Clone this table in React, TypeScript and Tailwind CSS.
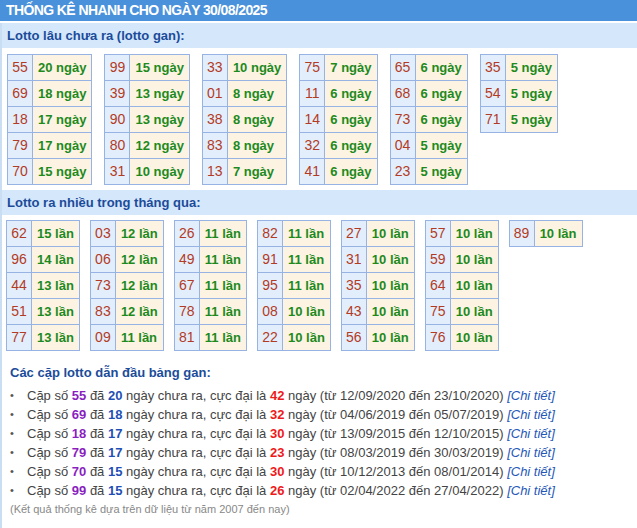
const gan: [string, string][][] = [
  [["55", "20"], ["69", "18"], ["18", "17"], ["79", "17"], ["70", "15"]],
  [["99", "15"], ["39", "13"], ["90", "13"], ["80", "12"], ["31", "10"]],
  [["33", "10"], ["01", "8"], ["38", "8"], ["83", "8"], ["13", "7"]],
  [["75", "7"], ["11", "6"], ["14", "6"], ["32", "6"], ["41", "6"]],
  [["65", "6"], ["68", "6"], ["73", "6"], ["04", "5"], ["23", "5"]],
  [["35", "5"], ["54", "5"], ["71", "5"]],
];

const nhieu: [string, string][][] = [
  [["62", "15"], ["96", "14"], ["44", "13"], ["51", "13"], ["77", "13"]],
  [["03", "12"], ["06", "12"], ["73", "12"], ["83", "12"], ["09", "11"]],
  [["26", "11"], ["49", "11"], ["67", "11"], ["78", "11"], ["81", "11"]],
  [["82", "11"], ["91", "11"], ["95", "11"], ["08", "10"], ["22", "10"]],
  [["27", "10"], ["31", "10"], ["35", "10"], ["43", "10"], ["56", "10"]],
  [["57", "10"], ["59", "10"], ["64", "10"], ["75", "10"], ["76", "10"]],
  [["89", "10"]],
];

const pairs = [
  ["55", "20", "42", "12/09/2020", "23/10/2020"],
  ["69", "18", "32", "04/06/2019", "05/07/2019"],
  ["18", "17", "30", "13/09/2015", "12/10/2015"],
  ["79", "17", "23", "08/03/2019", "30/03/2019"],
  ["70", "15", "30", "10/12/2013", "08/01/2014"],
  ["99", "15", "26", "02/04/2022", "27/04/2022"],
];

function NumTable({ rows, unit }: { rows: [string, string][]; unit: string }) {
  return (
    <table className="border-collapse self-start">
      <tbody>
        {rows.map(([n, c]) => (
          <tr key={n} className="h-[26px]">
            <td className="border border-[#97b3e3] bg-[#e3eefc] w-[25px] text-center text-[#b23b25] text-[14px] p-0">{n}</td>
            <td className="border border-[#97b3e3] bg-[#fdf3e3] px-[5px] font-bold text-[#1d8a1d] text-[13px] whitespace-nowrap">
              {c} {unit}
            </td>
          </tr>
        ))}
      </tbody>
    </table>
  );
}

function SectionTitle({ children }: { children: string }) {
  return (
    <div className="h-[25px] bg-[#d5e7fa] flex items-center pl-[5px] text-[13px] font-bold text-[#1b4c9a]">{children}</div>
  );
}

export default function App() {
  return (
    <div className="w-[637px] h-[528px] bg-white font-['Liberation_Sans',Arial,sans-serif] overflow-hidden">
      <div className="h-[21px] bg-[#4a91db] flex items-center pl-[6px] text-white font-bold text-[14px] tracking-[-0.6px]">
        THỐNG KÊ NHANH CHO NGÀY 30/08/2025
      </div>
      <div className="mt-[2px] border-l-2 border-[#c9ddf3] h-[505px]">
        <SectionTitle>Lotto lâu chưa ra (lotto gan):</SectionTitle>
        <div className="flex gap-[12px] pl-[5px] pt-[6px] h-[142px]">
          {gan.map((t, i) => (
            <NumTable key={i} rows={t} unit="ngày" />
          ))}
        </div>
        <SectionTitle>Lotto ra nhiều trong tháng qua:</SectionTitle>
        <div className="flex gap-[10px] pl-[4px] pt-[5px]">
          {nhieu.map((t, i) => (
            <NumTable key={i} rows={t} unit="lần" />
          ))}
        </div>
        <div className="pl-[8px] pt-[14px] text-[13px] text-[#444]">
          <div className="font-bold text-[13px] text-[#1b4c9a] leading-[16px] mb-[5px]">Các cặp lotto dẫn đầu bảng gan:</div>
          <ul className="leading-[19px]">
            {pairs.map(([n, d, m, f, t]) => (
              <li key={n} className="flex items-center">
                <span className="w-[17px] text-[#555] text-[11px]">•</span>
                <span className="whitespace-nowrap">
                  Cặp số <b className="text-[#8a1fc0]">{n}</b> đã <b className="text-[#1f4fb5]">{d}</b> ngày chưa ra, cực đại là{" "}
                  <b className="text-[#ee1a1a]">{m}</b> ngày (từ {f} đến {t}){" "}
                  <i className="text-[#2457b8]">[Chi tiết]</i>
                </span>
              </li>
            ))}
          </ul>
          <div className="text-[11px] text-[#888] leading-[18px]">(Kết quả thống kê dựa trên dữ liệu từ năm 2007 đến nay)</div>
        </div>
      </div>
    </div>
  );
}
